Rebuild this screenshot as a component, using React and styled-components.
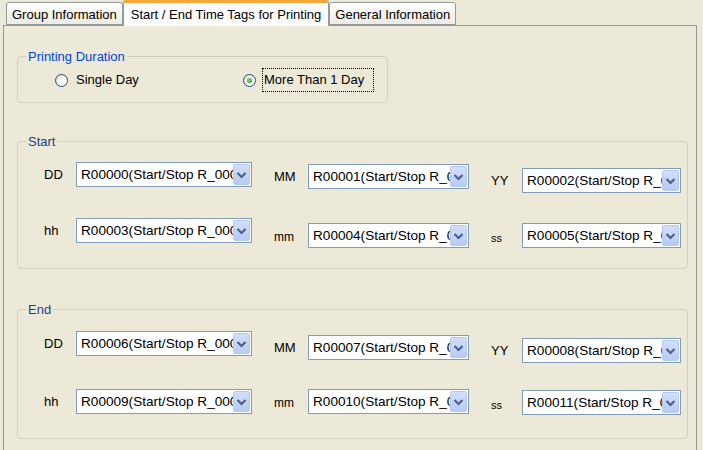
import React from "react";
import styled, { createGlobalStyle } from "styled-components";

const GlobalStyle = createGlobalStyle`
  html, body {
    margin: 0;
    padding: 0;
  }
  body {
    background: #ece9d8;
    font-family: "Liberation Sans", Arial, sans-serif;
    font-size: 13px;
    color: #000;
  }
`;

const Window = styled.div`
  width: 703px;
  height: 450px;
  overflow: hidden;
  background: #ece9d8;
`;

/* tab strip */
const TabStrip = styled.div`
  display: flex;
  align-items: flex-end;
  height: 26px;
  padding-left: 6px;
  position: relative;
  z-index: 2;
`;

const Tab = styled.div`
  box-sizing: border-box;
  height: ${p => (p.$active ? 26 : 23)}px;
  padding: ${p => (p.$active ? "3px 7px 0" : "3px 5px 0")};
  line-height: 17px;
  white-space: nowrap;
  border: 1px solid #919b9c;
  border-bottom: ${p => (p.$active ? "none" : "1px solid #919b9c")};
  border-top: ${p => (p.$active ? "3px solid #f5a73a" : "1px solid #919b9c")};
  border-radius: 3px 3px 0 0;
  background: ${p =>
    p.$active
      ? "#fcfcfe"
      : "linear-gradient(#ffffff, #f3f2ec 60%, #ecebe5)"};
  margin-bottom: ${p => (p.$active ? "0" : "1px")};
`;

const Panel = styled.div`
  box-sizing: border-box;
  margin: -1px 6px 0 3px;
  height: 460px;
  border: 1px solid #919b9c;
  background: #ece9d8;
  padding: 23px 8px 0 13px;
  position: relative;
  z-index: 1;
`;

/* group boxes */
const GroupBox = styled.fieldset`
  box-sizing: border-box;
  margin: ${p => p.$top || 0}px 0 0 0;
  width: ${p => p.$width || "auto"};
  min-width: 0;
  border: 1px solid #d0d0bf;
  border-radius: 4px;
  padding: ${p => p.$pad || "0 0 0 8px"};
`;

const Legend = styled.legend`
  padding: 0 2px;
  line-height: 15px;
  color: ${p => p.$color || "#0046d5"};
`;

/* radios */
const RadioRow = styled.div`
  display: flex;
  align-items: center;
  height: 24px;
  padding-left: 29px;
`;

const RadioOption = styled.label`
  display: flex;
  align-items: center;
  gap: 6px;
  width: ${p => p.$width || "auto"};
`;

const RadioCircle = styled.span`
  box-sizing: border-box;
  width: 13px;
  height: 13px;
  border-radius: 50%;
  border: 1px solid #1c5180;
  background: radial-gradient(circle at 70% 70%, #ffffff 30%, #d6d3c2 100%);
  display: flex;
  align-items: center;
  justify-content: center;
  &::after {
    content: "";
    display: ${p => (p.$checked ? "block" : "none")};
    width: 5px;
    height: 5px;
    border-radius: 50%;
    background: radial-gradient(circle at 40% 40%, #70e070, #21a121);
  }
`;

const RadioText = styled.span`
  padding: 3px 9px 3px 1px;
  line-height: 16px;
  border: 1px dotted ${p => (p.$focus ? "#000" : "transparent")};
`;

/* tag rows */
const TagGrid = styled.div`
  display: grid;
  grid-template-columns: 208px 195px 190px;
  grid-auto-rows: 32px;
  column-gap: 22px;
  row-gap: ${p => p.$rowGap}px;
  margin-left: 18px;
`;

const Cell = styled.div`
  display: flex;
  align-items: center;
  align-self: start;
  margin-top: ${p => p.$shift || 0}px;
`;

const FieldLabel = styled.span`
  width: ${p => p.$width}px;
  font-size: ${p => p.$size || 13}px;
  padding-top: ${p => p.$drop || 0}px;
  white-space: nowrap;
`;

const Combo = styled.div`
  box-sizing: border-box;
  display: flex;
  width: ${p => p.$width}px;
  height: 25px;
  border: 1px solid #7f9db9;
  background: #fff;
  padding: 1px;
`;

const ComboText = styled.span`
  flex: 1;
  overflow: hidden;
  white-space: nowrap;
  font-size: 13.6px;
  line-height: 21px;
  padding-left: 3px;
`;

const ComboButton = styled.span`
  box-sizing: border-box;
  width: 17px;
  flex: none;
  border: 1px solid #b5c8f2;
  border-radius: 2px;
  background: linear-gradient(#d2defc, #b7cbf7);
  display: flex;
  align-items: center;
  justify-content: center;
`;

const Chevron = () => (
  <svg width="11" height="8" viewBox="0 0 11 8">
    <path d="M1.5 2 L5.5 6 L9.5 2" fill="none" stroke="#4d6185" strokeWidth="2.2" />
  </svg>
);

const columns = [
  { label: 32, combo: 176 },
  { label: 34, combo: 161 },
  { label: 31, combo: 159 },
];

const labelsByRow = [
  [{ text: "DD" }, { text: "MM" }, { text: "YY" }],
  [{ text: "hh" }, { text: "mm", size: 12, drop: 2 }, { text: "ss", size: 11, drop: 5 }],
];

const groups = [
  { title: "Start", top: 31, pad: "13px 0 18px 8px", rowGap: 24, shifts: [[0, 2, 6], [0, 5, 5]], start: 0 },
  { title: "End", top: 33, pad: "14px 0 17px 8px", rowGap: 26, shifts: [[0, 4, 7], [0, 0, 1]], start: 6 },
];

function TagGroup({ group }) {
  return (
    <GroupBox $top={group.top} $pad={group.pad}>
      <Legend $color="#1d3f8f">{group.title}</Legend>
      <TagGrid $rowGap={group.rowGap}>
        {labelsByRow.map((row, r) =>
          row.map((lab, c) => {
            const n = String(group.start + r * 3 + c).padStart(5, "0");
            return (
              <Cell key={`${r}-${c}`} $shift={group.shifts[r][c]}>
                <FieldLabel $width={columns[c].label} $size={lab.size} $drop={lab.drop}>
                  {lab.text}
                </FieldLabel>
                <Combo $width={columns[c].combo}>
                  <ComboText>{`R${n}(Start/Stop R_${n})`}</ComboText>
                  <ComboButton>
                    <Chevron />
                  </ComboButton>
                </Combo>
              </Cell>
            );
          })
        )}
      </TagGrid>
    </GroupBox>
  );
}

export default function App() {
  return (
    <Window>
      <GlobalStyle />
      <TabStrip>
        <Tab>Group Information</Tab>
        <Tab $active>Start / End Time Tags for Printing</Tab>
        <Tab>General Information</Tab>
      </TabStrip>
      <Panel>
        <GroupBox $width="371px" $pad="4px 0 10px 8px">
          <Legend>Printing Duration</Legend>
          <RadioRow>
            <RadioOption $width="188px">
              <RadioCircle />
              <RadioText>Single Day</RadioText>
            </RadioOption>
            <RadioOption>
              <RadioCircle $checked />
              <RadioText $focus>More Than 1 Day</RadioText>
            </RadioOption>
          </RadioRow>
        </GroupBox>
        {groups.map(g => (
          <TagGroup key={g.title} group={g} />
        ))}
      </Panel>
    </Window>
  );
}
